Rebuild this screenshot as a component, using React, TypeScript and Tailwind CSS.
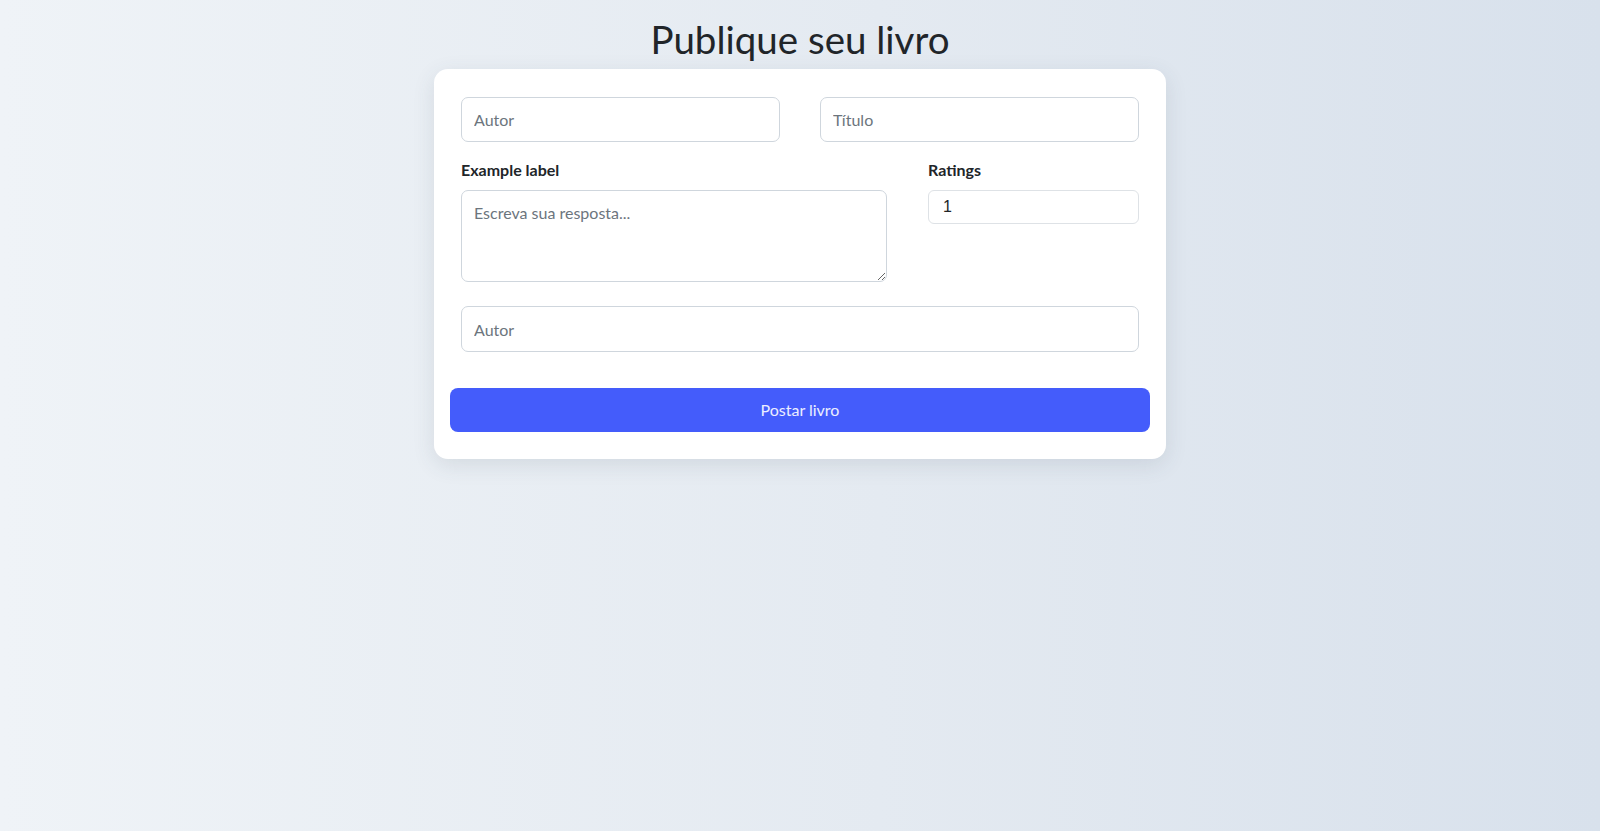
import { useState } from "react";

const font = { fontFamily: '"Lato", "Noto Sans", sans-serif' };

const inputClass =
  "h-[44px] w-full rounded-[7px] border border-[#cfd6dd] bg-white px-3 text-[16px] text-[#212529] placeholder:text-[#6c757d] outline-none";

const App = () => {
  const [rating, setRating] = useState("1");

  return (
    <div
      className="min-h-[831px] w-full bg-[linear-gradient(90deg,#eff3f7_0%,#e4eaf1_55%,#d8e1ec_100%)] text-[#212529]"
      style={font}
    >
      <div className="flex flex-col items-center pt-[15px]">
        <h1 className="mb-[6px] text-[38.5px] leading-[48px] font-normal text-[#212529]">
          Publique seu livro
        </h1>

        <form
          className="w-[732px] rounded-[14px] bg-white px-[16px] pt-[28px] pb-[27px] shadow-[0_6px_22px_rgba(60,72,88,0.12)]"
          onSubmit={(e) => e.preventDefault()}
        >
          <div className="px-[11px]">
            <div className="grid grid-cols-2 gap-[40px]">
              <input className={inputClass + " h-[45px]"} placeholder="Autor" />
              <input className={inputClass + " h-[45px]"} placeholder="Título" />
            </div>

            <div className="mt-[18px] grid grid-cols-[426px_1fr] gap-[41px]">
              <div>
                <label className="block text-[16px] leading-[20px] font-bold">
                  Example label
                </label>
                <textarea
                  className="mt-[10px] block h-[92px] w-full rounded-[7px] border border-[#cfd6dd] bg-white px-3 py-[10px] text-[16px] placeholder:text-[#6c757d] outline-none"
                  placeholder="Escreva sua resposta..."
                />
              </div>
              <div>
                <label className="block text-[16px] leading-[20px] font-bold">
                  Ratings
                </label>
                <input
                  type="number"
                  min={1}
                  max={5}
                  value={rating}
                  onChange={(e) => setRating(e.target.value)}
                  className="mt-[10px] block h-[34px] w-full rounded-[6px] border border-[#dee2e6] bg-white px-[14px] text-[16px] text-[#212529] outline-none"
                  style={{ fontFamily: '"Liberation Sans", Arial, sans-serif' }}
                />
              </div>
            </div>

            <div className="mt-[24px]">
              <input className={inputClass + " h-[46px]"} placeholder="Autor" />
            </div>
          </div>

          <button
            type="submit"
            className="mt-[36px] h-[44px] w-full rounded-[8px] bg-[#445cfb] text-[16px] text-white/90"
          >
            Postar livro
          </button>
        </form>
      </div>
    </div>
  );
};

export default App;
